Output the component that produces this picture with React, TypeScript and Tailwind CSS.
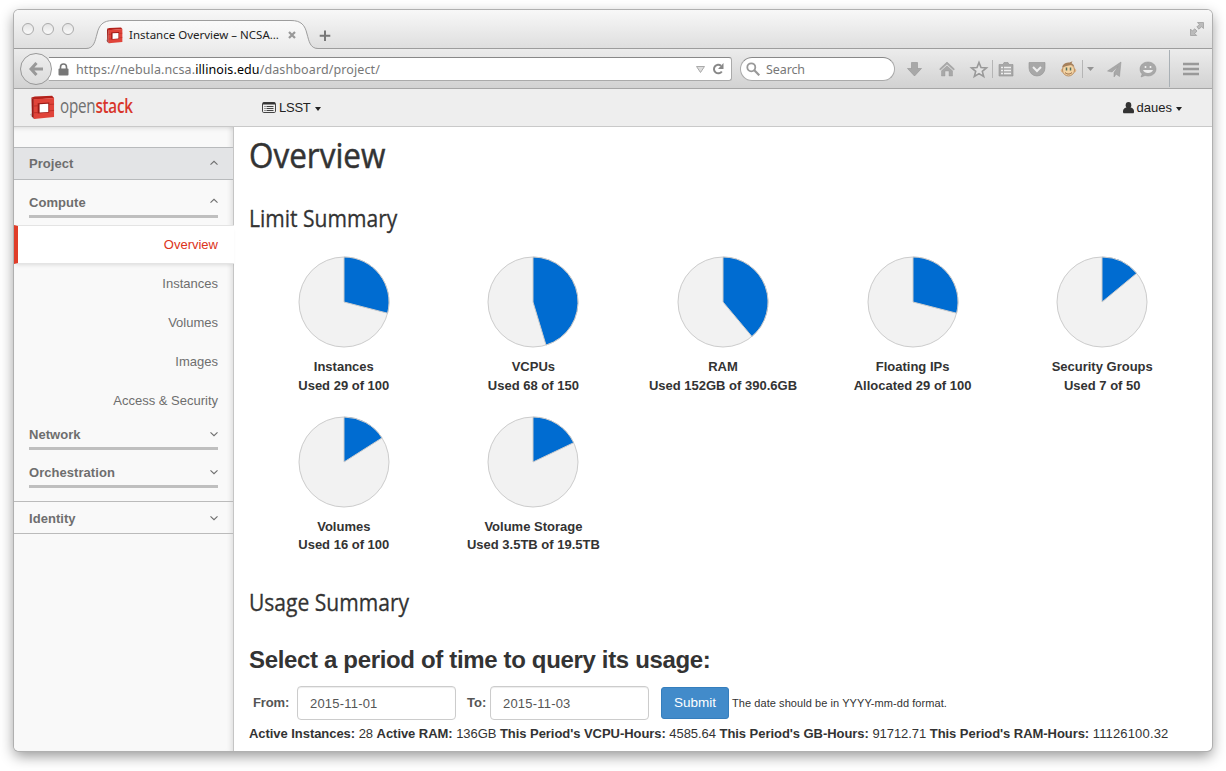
const PIES = [
  { name: 'Instances', text: 'Used 29 of 100', f: 0.29 },
  { name: 'VCPUs', text: 'Used 68 of 150', f: 0.4533 },
  { name: 'RAM', text: 'Used 152GB of 390.6GB', f: 0.389 },
  { name: 'Floating IPs', text: 'Allocated 29 of 100', f: 0.29 },
  { name: 'Security Groups', text: 'Used 7 of 50', f: 0.14 },
  { name: 'Volumes', text: 'Used 16 of 100', f: 0.16 },
  { name: 'Volume Storage', text: 'Used 3.5TB of 19.5TB', f: 0.1795 },
];

function Pie({ f }: { f: number }) {
  const a = f * Math.PI * 2;
  const x = 46 + 45 * Math.sin(a);
  const y = 46 - 45 * Math.cos(a);
  return (
    <svg width="92" height="92" viewBox="0 0 92 92" className="block">
      <circle cx="46" cy="46" r="45" fill="#f2f2f2" stroke="#ccc" />
      <path d={`M46 46V1A45 45 0 0 1 ${x} ${y}Z`} fill="#006cd1" stroke="#ccc" strokeWidth="1" />
    </svg>
  );
}

function Cube({ size }: { size: number }) {
  return (
    <svg width={size} height={size} viewBox="0 0 26 26" className="block shrink-0">
      <path d="M0 20L2 19V22L7 25 3 24.500Z" fill="#b5b5b5" />
      <path d="M1.500 2.500L4 4.500V24.500L2 22Z" fill="#9c1a16" />
      <path d="M1.500 2.500L5 1.500 23 .8 25 3 4 5Z" fill="#b3211a" />
      <path d="M4 4.500L25 3V23L4 25Z" fill="#e0443a" />
      <path d="M8 8.500L20 7.800V18.200L8 19.300Z" fill="#9c1a16" />
      <path d="M10 9.500L19 9V17.700L10 18.300Z" fill="#fff" />
      <path d="M4 11.500L8 11.200M20 9.800L25 9.500M4 18.500L8 18.200M20 16.500L25 16" stroke="#b52a22" strokeWidth=".8" fill="none" />
    </svg>
  );
}

function Chevron({ up }: { up?: boolean }) {
  return (
    <svg width="8" height="6" viewBox="0 0 8 6" className="block">
      <path d={up ? 'M.5 4.7L4 1.3 7.5 4.7' : 'M.5 1.3L4 4.7 7.5 1.3'} fill="none" stroke="#6e6e6e" strokeWidth="1.1" />
    </svg>
  );
}

function Group({ label, open }: { label: string; open?: boolean }) {
  return (
    <div className="mx-[15px] flex h-[38px] shrink-0 flex-col justify-end border-b-[3px] border-[#bfbfbf]">
      <div className="flex h-[21px] items-start justify-between">
        <b className="leading-[18px] tracking-[0.05px]">{label}</b>
        <span className={open ? 'pt-[4px]' : 'pt-[5px]'}><Chevron up={open} /></span>
      </div>
    </div>
  );
}

export default function App() {
  return (
    <div className="h-[771px] w-[1226px] overflow-hidden bg-white pl-[14px] pt-[10px] font-['Liberation_Sans',sans-serif] text-[13px] text-[#333]">
      <div className="flex h-[741px] w-[1198px] flex-col overflow-hidden rounded-[5px] bg-white shadow-[0_0_0_1px_#b0b0b0,0_5px_14px_rgba(0,0,0,0.42)]">
        <div className="flex h-[39px] shrink-0 bg-gradient-to-b from-[#f8f8f8] to-[#dedede] shadow-[inset_0_-1px_0_#9d9d9d]">
          <div className="flex w-[72px] gap-2 pl-2 pt-[13px]">
            {[0, 1, 2].map((i) => (
              <span key={i} className="h-3 w-3 rounded-full border border-[#aaa] bg-gradient-to-b from-[#e4e4e4] to-[#fafafa]" />
            ))}
          </div>
          <div className="relative h-[39px] w-[232px]">
            <svg width="232" height="39" viewBox="0 0 232 39" className="absolute left-0 top-0">
              <defs>
                <linearGradient id="tab" x1="0" y1="0" x2="0" y2="1">
                  <stop offset="0" stopColor="#fafafa" />
                  <stop offset="1" stopColor="#ececec" />
                </linearGradient>
              </defs>
              <path d="M0 38.500C8 38.500 9 31 11 24C13 15 17 10.500 27 10.500H205C215 10.500 219 15 221 24C223 31 224 38.500 232 38.500V40H0Z" fill="url(#tab)" />
              <path d="M0 38.500C8 38.500 9 31 11 24C13 15 17 10.500 27 10.500H205C215 10.500 219 15 221 24C223 31 224 38.500 232 38.500" fill="none" stroke="#9d9d9d" />
            </svg>
            <div className="relative flex h-[38px] items-center pl-[20px] pt-[12px]">
              <Cube size={17} />
              <span className="ml-[6px] w-[156px] whitespace-nowrap font-['Noto_Sans',sans-serif] text-[11.500px] text-[#222]">Instance Overview – NCSA…</span>
              <svg width="8" height="8" viewBox="0 0 8 8" className="ml-[3px]"><path d="M1 1L7 7M7 1L1 7" stroke="#999" strokeWidth="2.200" /></svg>
            </div>
          </div>
          <svg width="12" height="12" viewBox="0 0 12 12" className="ml-px mt-5"><path d="M6 .5V11M.7 5.800H11.300" stroke="#777" strokeWidth="2" /></svg>
          <svg width="14" height="14" viewBox="0 0 14 14" className="ml-auto mr-2 mt-3" fill="#bbb" stroke="#999" strokeWidth=".7">
            <path d="M7.500 .5h6v6l-2-1.800L9 7.200 6.800 5l2.500-2.500zM.5 7l1.800 2L4.800 6.800 7 9 4.700 11.500l2 2H.5z" />
          </svg>
        </div>

        <div className="flex h-[40px] shrink-0 items-center border-b border-[#a6a6a6] bg-gradient-to-b from-[#ececec] to-[#d2d2d2] pl-[6px] pt-px">
          <div className="relative z-10 flex h-8 w-8 shrink-0 items-center justify-center rounded-full border border-[#999] bg-gradient-to-b from-[#eee] to-[#dcdcdc]">
            <svg width="14" height="14" viewBox="0 0 14 14"><path d="M7.500 1L2 7l5.500 6M2 7h12" stroke="#999" strokeWidth="3" fill="none" /></svg>
          </div>
          <div className="-ml-[3px] flex h-6 w-[683px] items-center rounded-r-[3px] border border-l-0 border-[#aaa] border-t-[#888] bg-white pl-[9px] font-['Noto_Sans',sans-serif] text-[12.500px] text-[#777]">
            <svg width="11" height="13" viewBox="0 0 11 13"><path d="M2.500 6V4a3 3 0 0 1 6 0V6" fill="none" stroke="#777" strokeWidth="1.600" /><rect x=".5" y="5.500" width="10" height="7" rx="1" fill="#777" /></svg>
            <span className="ml-[7px] whitespace-nowrap pt-[3px] tracking-[0.11px]">https://nebula.ncsa.<span className="text-black">illinois.edu</span>/dashboard/project/</span>
            <svg width="9" height="7" viewBox="0 0 9 7" className="ml-auto"><path d="M.5 .5h8L4.500 6.500z" fill="#ddd" stroke="#aaa" /></svg>
            <svg width="12" height="12" viewBox="0 0 12 12" className="ml-[7px] mr-[7px]"><path d="M9.800 8.500A4.300 4.300 0 1 1 9 2.700" fill="none" stroke="#888" strokeWidth="2" /><path d="M11.500 0v6H6z" fill="#888" /></svg>
          </div>
          <div className="ml-2 flex h-6 w-[155px] items-center rounded-full border border-[#aaa] border-t-[#888] bg-white pl-[5px] font-['Noto_Sans',sans-serif] text-[12.500px] text-[#777]">
            <svg width="14" height="14" viewBox="0 0 14 14"><circle cx="5.300" cy="5.300" r="4" fill="none" stroke="#999" strokeWidth="1.800" /><path d="M8.300 8.300l5 5" stroke="#999" strokeWidth="2.200" /></svg>
            <span className="ml-[6px] pt-[3px] tracking-[-0.1px]">Search</span>
          </div>
          <svg width="314" height="38" viewBox="895 50 314 38" className="shrink-0" fill="#a8a8a8">
            <path d="M911.500 62.500h6v6h4l-7 7.500-7-7.500h4z" stroke="#929292" strokeWidth=".6" />
            <path d="M939.500 69l7.500-7 7.500 7-1 1-6.500-6-6.500 6zM941.500 70.800l5.500-5 5.500 5v5.200h-3.500v-5h-4v5h-3.500z" stroke="#929292" strokeWidth=".4" />
            <path d="M979 62.500l2 5 5.500.4-4.200 3.500 1.400 5.100-4.700-2.900-4.700 2.900 1.400-5.100-4.200-3.500 5.500-.4z" fill="#e4e4e4" stroke="#999" strokeWidth="1.600" />
            <path d="M992.500 60v18M1082.500 60v18" stroke="#b5b5b5" /><path d="M1169.500 50v37" stroke="#a9b0b5" />
            <path d="M999 64.500h4l1-2h4l1 2h4v11.500h-14z" stroke="#929292" strokeWidth=".6" />
            <path d="M1001 67.500h2M1004 67.500h7M1001 70.500h2M1004 70.500h7M1001 73.500h2M1004 73.500h7" stroke="#eee" strokeWidth="1.500" />
            <path d="M1029 62.500h16v5.500a8 8 0 0 1-16 0z" stroke="#929292" strokeWidth=".6" /><path d="M1033 67l4 4 4-4" fill="none" stroke="#eee" strokeWidth="2" />
            <circle cx="1062.800" cy="70.500" r="2" fill="#e0b585" /><circle cx="1074.200" cy="70.500" r="2" fill="#e0b585" />
            <ellipse cx="1068.500" cy="70" rx="6" ry="6" fill="#f3d3a3" stroke="#ba9066" />
            <path d="M1062 67.500c1-4 4-5 7.500-5l3-1.300-1 2c1 .6 2.500 1.800 3 3.300l-3-1.500-5 1z" fill="#a5805c" />
            <path d="M1066.500 67.500v3M1070.500 67.500v3" stroke="#507060" strokeWidth="1.500" /><path d="M1065 72.500c2 2 5 2 7 0" stroke="#91633f" fill="none" />
            <path d="M1087 67h7l-3.500 4z" fill="#949494" />
            <path d="M1121 62l-13.500 9 4.500 1 6-5.500-4 6v4.500l2.200-2.800 3.300 2.300z" stroke="#929292" strokeWidth=".5" />
            <path d="M1148 62c4.500 0 8 3 8 7s-3.500 7-8 7l-3-.5-4 1.500 1.200-3c-1.400-1-2.200-3-2.200-5 0-4 3.500-7 8-7z" stroke="#929292" strokeWidth=".5" />
            <path d="M1145.500 66v2M1150.500 66v2" stroke="#eee" strokeWidth="1.600" /><path d="M1143 70h10c-1 4-9 4-10 0z" fill="#eee" />
            <path d="M1183 64h16M1183 69h16M1183 74h16" stroke="#999" strokeWidth="2.400" />
          </svg>
        </div>

        <header className="flex h-[38px] shrink-0 items-center border-b border-[#c9c9c9] bg-[#eee] pl-[16px] text-[#222]">
          <Cube size={25} />
          <div className="ml-[5px] w-[197px] pb-[3px]">
            <span className="inline-block origin-left scale-x-[0.76] whitespace-nowrap font-['Open_Sans',sans-serif] text-[20px] leading-[30px] tracking-[-0.3px] text-[#707070]">open<span className="font-semibold text-[#d8352a]">stack</span></span>
          </div>
          <svg width="14" height="11" viewBox="0 0 14 11" className="ml-[5px]"><rect x=".5" y=".5" width="13" height="10" rx="1.200" fill="#eee" stroke="#444" /><path d="M1 1.500h12" stroke="#333" strokeWidth="2" /><path d="M2.500 4.500h1M4.500 4.500h7M2.500 6.500h1M4.500 6.500h7M2.500 8.500h1M4.500 8.500h7" stroke="#444" /></svg>
          <span className="ml-[3px] tracking-[-0.25px]">LSST</span>
          <span className="ml-1 mt-[3px] border-x-[3.500px] border-t-[4px] border-x-transparent border-t-[#222]" />
          <svg width="11" height="12" viewBox="0 0 11 12" className="ml-auto" fill="#333"><ellipse cx="5.500" cy="3.200" rx="2.800" ry="3.200" /><path d="M3 5.500h5c2.500 1 3 2 3 4 0 1.300-.3 1.800-1.200 1.800H1.200C.3 11.300 0 10.800 0 9.500c0-2 .5-3 3-4z" /></svg>
          <span className="ml-[3px]">daues</span>
          <span className="ml-1 mr-[30px] mt-[3px] border-x-[3.500px] border-t-[4px] border-x-transparent border-t-[#222]" />
        </header>

        <div className="flex h-[624px]">
          <aside className="flex w-[220px] shrink-0 flex-col border-r border-[#c5c5c5] bg-[#f9f9f9] pt-5 text-[#6e6e6e] shadow-[inset_-5px_0_5px_-3px_rgba(0,0,0,0.1),inset_0_5px_5px_-4px_rgba(0,0,0,0.12)]">
            <div className="flex h-[33px] shrink-0 items-center justify-between border-y border-[#b8babc] bg-[#e3e4e6] px-[15px]"><b className="tracking-[0.05px]">Project</b><span className="pb-[2px]"><Chevron up /></span></div>
            <Group label="Compute" open />
            <div className="-mr-px mt-[7px] flex h-[39px] shrink-0 items-center justify-end border-y border-l-4 border-y-[#e4e4e4] border-l-[#e03d29] bg-white pr-4 text-[#dc3320] shadow-[0_3px_4px_-2px_rgba(0,0,0,0.12)]">Overview</div>
            {['Instances', 'Volumes', 'Images', 'Access & Security'].map((t) => (
              <div key={t} className="flex h-[39px] shrink-0 items-center justify-end pr-[15px]">{t}</div>
            ))}
            <div className="-mt-[8px] flex shrink-0 flex-col"><Group label="Network" /><Group label="Orchestration" /></div>
            <div className="mt-[13px] flex h-[33px] shrink-0 items-center justify-between border-y border-[#bbb] px-[15px]"><b className="pt-[2px] tracking-[0.05px]">Identity</b><Chevron /></div>
          </aside>

          <main className="flex w-[977px] flex-col pl-[15px]">
            <h1 className="mt-[4px] h-[48px] whitespace-nowrap font-['Open_Sans',sans-serif] text-[34px] leading-[48px] [-webkit-text-stroke:0.5px_#333]"><span className="inline-block origin-left scale-x-[0.925]">Overview</span></h1>
            <h2 className="mt-[22px] h-[34px] whitespace-nowrap font-['Open_Sans',sans-serif] text-[23px] leading-[34px] [-webkit-text-stroke:0.3px_#333]"><span className="inline-block origin-left scale-x-[0.915]">Limit Summary</span></h2>
            <div className="mt-[21px] grid h-[319px] w-[948px] auto-rows-[159.500px] grid-cols-5">
              {PIES.map((p) => (
                <div key={p.name} className="flex flex-col items-center whitespace-nowrap text-center font-bold leading-[18.500px]">
                  <Pie f={p.f} />
                  <div className="mt-[10px]">{p.name}</div>
                  <div>{p.text}</div>
                </div>
              ))}
            </div>
            <h2 className="mt-[10px] h-[34px] whitespace-nowrap font-['Open_Sans',sans-serif] text-[23px] leading-[34px] [-webkit-text-stroke:0.3px_#333]"><span className="inline-block origin-left scale-x-[0.915]">Usage Summary</span></h2>
            <h3 className="mt-[25px] h-[32px] whitespace-nowrap text-[24px] font-bold leading-[32px] tracking-[-0.34px]">Select a period of time to query its usage:</h3>
            <div className="mt-[10px] flex h-[34px] items-center">
              <b className="ml-1 w-[44px] tracking-[-0.15px] text-[#555]">From:</b>
              <div className="flex h-[34px] w-[159px] items-center rounded-[4px] border border-[#ccc] pl-3 pt-px tracking-[0.2px] text-[#555] shadow-[inset_0_1px_1px_rgba(0,0,0,0.075)]">2015-11-01</div>
              <b className="ml-[11px] w-[23px] text-[#555]">To:</b>
              <div className="flex h-[34px] w-[159px] items-center rounded-[4px] border border-[#ccc] pl-3 pt-px tracking-[0.2px] text-[#555] shadow-[inset_0_1px_1px_rgba(0,0,0,0.075)]">2015-11-03</div>
              <button className="ml-3 h-8 w-[68px] rounded-[3px] border border-[#357ebd] bg-[#428bca] pt-px text-[13.500px] text-white">Submit</button>
              <span className="ml-[3px] whitespace-nowrap text-[11px] tracking-[0.07px]">The date should be in YYYY-mm-dd format.</span>
            </div>
            <div className="mt-[4px] whitespace-nowrap leading-5">
              <span className="tracking-[-0.05px]"><b>Active Instances:</b> 28 <b>Active RAM:</b> 136GB <b>This Period's VCPU-Hours:</b> 4585.64 <b>This Period's GB-Hours:</b> 91712.71 <b>This Period's RAM-Hours:</b></span> <span className="tracking-[0.15px]">11126100.32</span>
            </div>
          </main>
        </div>
      </div>
    </div>
  );
}
